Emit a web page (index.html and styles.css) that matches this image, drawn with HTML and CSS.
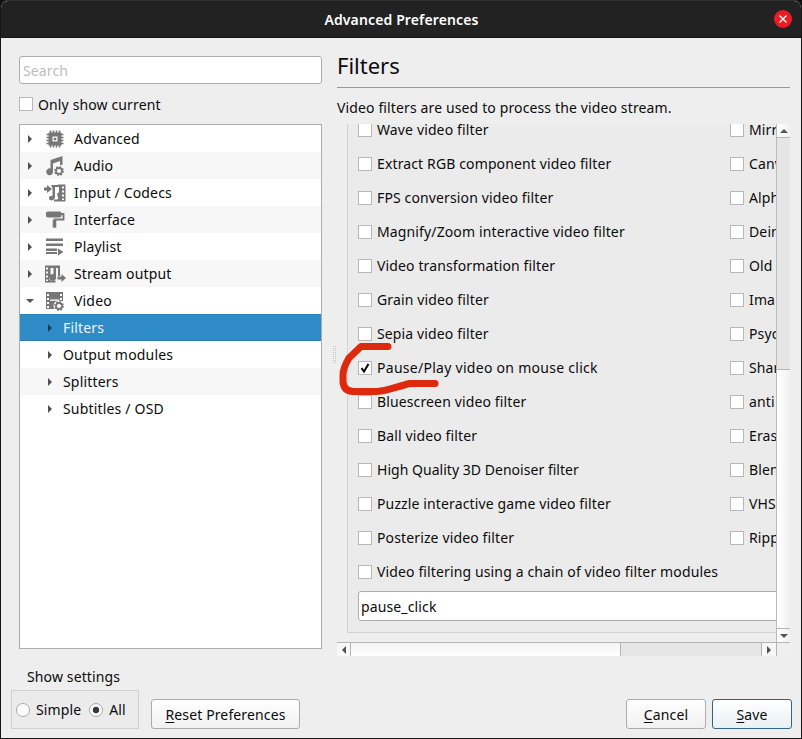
FILE: index.html
```html
<!DOCTYPE html>
<html lang="en">
<head>
<meta charset="utf-8">
<title>Advanced Preferences</title>
<link rel="stylesheet" href="styles.css">
</head>
<body>
<div class="window">
  <header class="titlebar">
    <h1>Advanced Preferences</h1>
    <button class="close" aria-label="Close"><svg viewBox="0 0 18 18"><path d="M5.500 5.500l7 7M12.500 5.500l-7 7" stroke="#fff" stroke-width="1.400"/></svg></button>
  </header>
  <main class="panes">
    <section class="sidebar">
      <input class="search" type="text" placeholder="Search">
      <label class="current"><i class="box"></i><span>Only show current</span></label>
      <ul class="tree">
        <li><i class="arrow"></i><svg class="icon" viewBox="0 0 20 20"><path d="M4 3.500h12a.5.5 0 0 1 .5.500v12a.5.5 0 0 1-.5.500H4a.5.5 0 0 1-.5-.500V4a.5.5 0 0 1 .5-.500zM7.500 7.500v5h5v-5z" fill-rule="evenodd"/><path d="M8.700 8.700h2.600v2.600H8.700z"/><path d="M5.500 1.500v17M8.500 1.500v17M11.500 1.500v17M14.500 1.500v17M1.500 5.500h17M1.500 8.500h17M1.500 11.500h17M1.500 14.500h17" stroke-width="1.600" stroke-dasharray="3 11"/></svg><span>Advanced</span></li>
        <li><i class="arrow"></i><svg class="icon" viewBox="0 0 20 20"><path d="M5.500 4L17.500 0v9h-2.500V5L8 7.500V16a3.400 3.400 0 1 1-2.500-3.500z"/><circle cx="14" cy="15" r="3" class="ring"/><circle cx="14" cy="15" r="4.200" class="teeth"/></svg><span>Audio</span></li>
        <li><i class="arrow"></i><svg class="icon wide" viewBox="0 0 22 20"><path d="M0 4.500h3V2l5 4-5 4V7.500H0z"/><path d="M7 2h7v2h-3v9.500a3.500 3.500 0 0 1-5 3.500c-2-1-1-5 2.500-4V5z"/><path d="M14 1.500h7.500v17H10v-2h3c1 0 1.500-1 1-2.500l-1-3 2-2V4h-1zM18 3.500v2h2v-2zm0 4v2h2v-2zm0 4v2h2v-2zm0 4v1.500h2v-1.500z" fill-rule="evenodd"/></svg><span>Input / Codecs</span></li>
        <li><i class="arrow"></i><svg class="icon" viewBox="0 0 20 20"><rect x="1" y="1.500" width="15.500" height="6" rx="1.800"/><path d="M16 4h2.500v5.500H9.500v8" fill="none" stroke-width="1.900"/><path d="M7.700 10h3.600v7.500H7.700z"/></svg><span>Interface</span></li>
        <li><i class="arrow"></i><svg class="icon" viewBox="0 0 20 20"><path d="M1 1.500h17V4H1zM1 6.500h17V9H1zM1 11.500h11V14H1zM1 15h11v2H1zM13 11.500l5.500 3.500-5.500 3.500z"/></svg><span>Playlist</span></li>
        <li><i class="arrow"></i><svg class="icon wide" viewBox="0 0 22 20"><path d="M1 1.500h7V4H6.500v8L5 15l1.500 1.500h5v2H1zM2 3.500v2h2v-2zm0 4v2h2v-2zm0 4v2h2v-2zm0 4v1.500h2v-1.500z" fill-rule="evenodd"/><path d="M8 1.500h8V12h-2V4h-2v9.500a3.300 3.300 0 1 1-2.500-3.300V4H8zM13.500 12.500h4V10l4.500 4-4.500 4v-2.500h-4z"/></svg><span>Stream output</span></li>
        <li><i class="arrow open"></i><svg class="icon" viewBox="0 0 20 20"><path d="M1 1h17v9h-6l-3 4v4H1zM2 3v2h2V3zm0 4v2h2V7zm0 4v2h2v-2zm0 4v2h2v-2zM15 3v2h2V3zm0 4v2h2V7zM5 8.500v1.200h9V8.500z" fill-rule="evenodd"/><circle cx="14" cy="15" r="5.500" fill="#fff"/><circle cx="14" cy="15" r="3" class="ring"/><circle cx="14" cy="15" r="4.200" class="teeth"/></svg><span>Video</span></li>
        <li class="child selected"><i class="arrow"></i><span>Filters</span></li>
        <li class="child"><i class="arrow"></i><span>Output modules</span></li>
        <li class="child"><i class="arrow"></i><span>Splitters</span></li>
        <li class="child"><i class="arrow"></i><span>Subtitles / OSD</span></li>
      </ul>
    </section>
    <div class="splitter"><i></i></div>
    <section class="content">
      <h2>Filters</h2>
      <p class="intro">Video filters are used to process the video stream.</p>
      <div class="scroller">
        <div class="viewport">
          <div class="group">
            <div class="option"><i class="box"></i><span>Wave video filter</span><i class="box"></i><span>Mirr</span></div>
            <div class="option"><i class="box"></i><span>Extract RGB component video filter</span><i class="box"></i><span>Canv</span></div>
            <div class="option"><i class="box"></i><span>FPS conversion video filter</span><i class="box"></i><span>Alph</span></div>
            <div class="option"><i class="box"></i><span>Magnify/Zoom interactive video filter</span><i class="box"></i><span>Dein</span></div>
            <div class="option"><i class="box"></i><span>Video transformation filter</span><i class="box"></i><span>Old</span></div>
            <div class="option"><i class="box"></i><span>Grain video filter</span><i class="box"></i><span>Ima</span></div>
            <div class="option"><i class="box"></i><span>Sepia video filter</span><i class="box"></i><span>Psyc</span></div>
            <div class="option"><i class="box"><svg viewBox="0 0 12 12"><path d="M2.500 6.200L5 9.500L9.500 2" fill="none" stroke="#000" stroke-width="2"/></svg></i><span class="looser">Pause/Play video on mouse click</span><i class="box"></i><span>Shar</span></div>
            <div class="option"><i class="box"></i><span>Bluescreen video filter</span><i class="box"></i><span>anti</span></div>
            <div class="option"><i class="box"></i><span>Ball video filter</span><i class="box"></i><span>Eras</span></div>
            <div class="option"><i class="box"></i><span class="tighter">High Quality 3D Denoiser filter</span><i class="box"></i><span>Blen</span></div>
            <div class="option"><i class="box"></i><span>Puzzle interactive game video filter</span><i class="box"></i><span>VHS</span></div>
            <div class="option"><i class="box"></i><span>Posterize video filter</span><i class="box"></i><span>Ripp</span></div>
            <div class="option"><i class="box"></i><span>Video filtering using a chain of video filter modules</span></div>
            <input class="chain" type="text" value="pause_click">
          </div>
        </div>
        <div class="vbar"><b><i class="arrow up"></i></b><div class="thumb"></div><b class="end"><i class="arrow open"></i></b></div>
        <div class="hbar"><b><i class="arrow left"></i></b><div class="track"></div><div class="thumb"></div><b class="end"><i class="arrow"></i></b></div>
        <div class="corner"></div>
      </div>
    </section>
  </main>
  <footer class="actions">
    <fieldset class="settings">
      <legend>Show settings</legend>
      <div class="modes"><i class="radio"></i><span>Simple</span><i class="radio on"></i><span>All</span></div>
    </fieldset>
    <button class="button reset"><span><u>R</u>eset Preferences</span></button>
    <button class="button cancel"><span><u>C</u>ancel</span></button>
    <button class="button save"><span><u>S</u>ave</span></button>
  </footer>
  <svg class="mark" viewBox="0 0 104 58"><path d="M51 8.500H24L12 20Q6 30 6 37V44Q7 53 16 53.500H40C51 53 61 48 73 45.500H98" fill="none" stroke="#df290e" stroke-width="7" stroke-linecap="round" stroke-linejoin="round"/></svg>
</div>
</body>
</html>
```
FILE: styles.css
```css
* { box-sizing: border-box; }
body { margin: 0; width: 802px; height: 739px; overflow: hidden; background: #111; }
body, input, button { font: 14px/20px "Noto Sans", sans-serif; letter-spacing: .13px; color: #0b0b0b; }
.window { position: relative; height: 739px; border: 1px solid #171717; border-top-color: #303030; border-radius: 8px 8px 0 0; background: #eee; display: flex; flex-direction: column; overflow: hidden; }
.titlebar { height: 37px; flex: none; background: #222; border-bottom: 1px solid #181818; display: grid; grid-template-columns: 1fr auto 1fr; align-items: center; padding: 0 9px 0 10px; }
.titlebar h1 { grid-column: 2; margin: 2px 0 0; color: #fff; font-size: 14px; line-height: 20px; font-weight: 600; letter-spacing: .13px; }
.close { justify-self: end; width: 18px; height: 18px; padding: 0; border: 0; border-radius: 50%; background: #ed1c24; }
.close svg { display: block; }

.panes { display: flex; height: 619px; flex: none; padding-left: 18px; }
.sidebar { width: 303px; padding-top: 18px; flex: none; }
.search, .chain { display: block; border: 1px solid #adadad; border-radius: 3px; background: #fff; padding: 0 3px; outline: 0; }
.search { width: 303px; height: 28px; }
.search::placeholder { color: #bcbcbc; opacity: 1; }
.current { display: flex; align-items: center; gap: 5px; height: 20px; margin-top: 10px; }
.current span { padding-top: 2px; }
.box { width: 14px; height: 14px; border: 1px solid #b8b8b8; background: #fff; flex: none; }
.box svg { display: block; width: 12px; height: 12px; }

.tree { margin: 10px 0 0; padding: 0; list-style: none; width: 303px; height: 525px; border: 1px solid #adadad; background: #fff; }
.tree li { display: grid; grid-template-columns: 20px 34px 1fr; align-items: center; height: 27px; letter-spacing: .18px; }
.tree li:nth-child(even) { background: #f7f7f7; }
.tree li.child { grid-template-columns: 19px 1fr; column-gap: 4px; padding-left: 20px; }
.tree li.selected { background: #308cc6; border-top: 1px solid #2c80b6; border-bottom: 1px solid #2c80b6; color: #e9f6ff; }
.arrow { justify-self: center; border: solid transparent; border-width: 4px 0 4px 4px; border-left-color: #505050; width: 0; height: 0; }
.arrow.open { border-width: 4px 4px 0; border-color: #555 transparent; }
.arrow.up { border-width: 0 4px 4px; border-color: transparent transparent #555; }
.arrow.left { border-width: 4px 4px 4px 0; border-color: transparent #505050; }
.selected .arrow { border-left-color: #173e58; }
.icon { width: 20px; height: 20px; margin-left: 5px; fill: #777; stroke: none; }
.icon path[stroke-width] { stroke: #777; }
.icon.wide { width: 22px; margin-left: 4px; }
.icon .ring { fill: #fff; stroke: #777; stroke-width: 1.8; }
.icon .teeth { fill: none; stroke: #777; stroke-width: 1.5; stroke-dasharray: 1.65 1.65; }

.splitter { width: 15px; flex: none; display: flex; align-items: center; justify-content: center; }
.splitter i { height: 17px; width: 3px; margin-left: 10px; margin-top: 14px; border: dotted #c4c4c4; border-width: 0 1px; }
.content { width: 453px; padding-top: 13px; flex: none; }
.content h2 { height: 37px; margin: 0; font-size: 22px; line-height: 28px; font-weight: 400; letter-spacing: 0; border-bottom: 1px solid #979797; }
.intro { margin: 10px 0 6px; height: 20px; white-space: nowrap; }
.scroller { display: grid; grid-template-columns: 439px 14px; grid-template-rows: 518px 14px; }
.viewport { overflow: hidden; padding: 0 0 0 10px; }
.group { width: 700px; height: 520px; margin-top: -12px; padding-left: 10px; border: 1px solid #d3d3d3; background: #ebebeb; height: 521px; }
.option { display: grid; grid-template-columns: 14px 348px 14px 60px; column-gap: 5px; align-items: center; height: 34px; white-space: nowrap; }
.looser { letter-spacing: .28px; }
.tighter { letter-spacing: .03px; }
.chain { width: 660px; height: 30px; margin-top: 2px; padding-left: 2px; }
.vbar { border-left: 1px solid #bbb; background: linear-gradient(90deg,#fff,#f1f1f1); display: flex; flex-direction: column; }
.vbar b, .hbar b { display: flex; align-items: center; justify-content: center; flex: none; }
.vbar b { height: 13px; }
.vbar .end { margin-top: auto; height: 14px; border-top: 1px solid #b5b5b5; }
.vbar .thumb { height: 233px; border: solid #b5b5b5; border-width: 1px 0; background: #e6e6e6; }
.hbar { border-top: 1px solid #b5b5b5; display: flex; }
.hbar b { width: 14px; border-right: 1px solid #b5b5b5; background: #f7f7f7; }
.hbar .track { width: 269px; background: linear-gradient(#f4f4f4,#fff); }
.hbar .thumb { flex: 1; border: solid #b5b5b5; border-width: 0 1px; background: #e6e6e6; }
.hbar .end { border: 0; }
.corner { border: solid #b5b5b5; border-width: 1px 0 0 1px; background: #efefef; }

.actions { display: flex; height: 81px; padding: 10px 9px 9px 10px; align-items: flex-end; }
.settings { width: 128px; height: 62px; margin: 0 12px 0 0; padding: 0; border: 0; }
.settings legend { padding: 0; height: 23px; margin-left: 16px; }
.modes { height: 39px; border: 1px solid #d0d0d0; background: #ebebeb; display: flex; align-items: center; padding-left: 4px; }
.radio { width: 14px; height: 14px; border: 1px solid #aaa; border-radius: 50%; background: #fff; margin-right: 6px; }
.modes span + .radio { margin-left: 8px; }
.radio.on { background: radial-gradient(circle, #3b3b3b 0 3px, #fff 3.6px); }
.button { height: 30px; padding: 1px 0 0; border: 1px solid #acacac; border-radius: 3px; background: linear-gradient(#fff,#f1f1f1); width: 80px; flex: none; }
.button u { text-underline-offset: 2px; }
.reset { width: 149px; }
.cancel { margin-left: auto; margin-right: 6px; }
.save { border-color: #30658e; background: linear-gradient(#fff,#e9f1f5); }
.mark { position: absolute; left: 336px; top: 337px; width: 104px; height: 58px; }
```
